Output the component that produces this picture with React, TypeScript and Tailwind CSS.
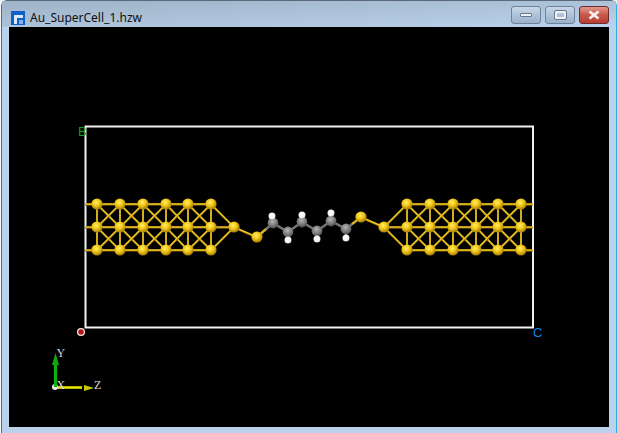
const columnsLeft = [97, 120, 143, 166, 188, 211];
const columnsRight = [407, 430, 453, 476, 498, 521];
const rows = [204, 227, 250];

type Line = [number, number, number, number];

function slabBonds(cols: number[]) {
  const lines: Line[] = [];
  cols.forEach((x, i) => {
    lines.push([x, rows[0], x, rows[2]]);
    const next = cols[i + 1];
    if (next === undefined) return;
    lines.push([x, rows[0], next, rows[1]]);
    lines.push([next, rows[0], x, rows[1]]);
    lines.push([x, rows[1], next, rows[2]]);
    lines.push([next, rows[1], x, rows[2]]);
  });
  rows.forEach((y) => lines.push([cols[0], y, cols[cols.length - 1], y]));
  return lines;
}

const goldBonds: Line[] = [
  ...slabBonds(columnsLeft),
  ...slabBonds(columnsRight),
  [85, 204, 97, 204],
  [85, 227, 97, 227],
  [85, 250, 97, 250],
  [521, 204, 533, 204],
  [521, 227, 533, 227],
  [521, 250, 533, 250],
  [211, 204, 234, 227],
  [211, 227, 234, 227],
  [211, 250, 234, 227],
  [407, 204, 384, 227],
  [407, 227, 384, 227],
  [407, 250, 384, 227],
  [234, 227, 257, 237],
  [361, 217, 384, 227],
];

const carbons = [
  [273, 223],
  [288, 232],
  [302, 222],
  [317, 231],
  [331, 221],
  [346, 229],
];

const hydrogens = [
  [272, 216],
  [288, 240],
  [302, 215],
  [317, 239],
  [331, 213],
  [346, 238],
];

const goldAtoms = [
  ...columnsLeft.flatMap((x) => rows.map((y) => [x, y])),
  ...columnsRight.flatMap((x) => rows.map((y) => [x, y])),
  [234, 227],
  [384, 227],
  [257, 237],
  [361, 217],
];

// offset everything from page coordinates to the viewport's own
const VIEW = "9 27 600 400";

function Scene() {
  return (
    <svg viewBox={VIEW} className="block w-full h-full">
      <defs>
        <radialGradient id="gold" cx="42%" cy="36%" r="65%">
          <stop offset="0%" stopColor="#fff06a" />
          <stop offset="50%" stopColor="#f2c414" />
          <stop offset="100%" stopColor="#9c7808" />
        </radialGradient>
        <radialGradient id="carbon" cx="45%" cy="35%" r="65%">
          <stop offset="0%" stopColor="#b4b4b4" />
          <stop offset="60%" stopColor="#7a7a7a" />
          <stop offset="100%" stopColor="#4c4c4c" />
        </radialGradient>
        <radialGradient id="hydrogen" cx="45%" cy="40%" r="65%">
          <stop offset="0%" stopColor="#ffffff" />
          <stop offset="75%" stopColor="#f0f0f0" />
          <stop offset="100%" stopColor="#a8a8a8" />
        </radialGradient>
      </defs>

      {/* cell box */}
      <rect x="85.5" y="126.5" width="447.5" height="201" fill="none" stroke="#f2f2f2" strokeWidth="2" />

      {goldBonds.map(([x1, y1, x2, y2], i) => (
        <g key={i}>
          <line x1={x1} y1={y1 + 0.6} x2={x2} y2={y2 + 0.6} stroke="#8f7010" strokeWidth="2" />
          <line x1={x1} y1={y1} x2={x2} y2={y2} stroke="#f2c81e" strokeWidth="1.4" />
        </g>
      ))}

      {/* carbon chain */}
      <polyline
        points="257,237 273,223 288,232 302,222 317,231 331,221 346,229 361,217"
        fill="none"
        stroke="#747474"
        strokeWidth="2.4"
      />
      <line x1="257" y1="237" x2="266" y2="229" stroke="#e2b31a" strokeWidth="2.2" />
      <line x1="352" y1="224" x2="361" y2="217" stroke="#e2b31a" strokeWidth="2.2" />
      {hydrogens.map(([x, y], i) => (
        <line key={i} x1={carbons[i][0]} y1={carbons[i][1]} x2={x} y2={y} stroke="#a0a0a0" strokeWidth="2" />
      ))}

      {goldAtoms.map(([x, y]) => (
        <circle key={`${x}-${y}`} cx={x} cy={y} r="5.6" fill="url(#gold)" />
      ))}
      {carbons.map(([x, y]) => (
        <circle key={`${x}-${y}`} cx={x} cy={y} r="5.4" fill="url(#carbon)" />
      ))}
      {hydrogens.map(([x, y]) => (
        <circle key={`${x}-${y}`} cx={x} cy={y} r="3.5" fill="url(#hydrogen)" />
      ))}

      {/* cell labels */}
      <circle cx="81" cy="332" r="3.4" fill="#b01414" stroke="#f0e4e4" strokeWidth="1.3" />
      <text x="78" y="136" fontSize="13" fontFamily="Liberation Sans" fill="#12a01c">B</text>
      <text x="533" y="337" fontSize="13" fontFamily="Liberation Sans" fill="#0a84e8">C</text>

      {/* axes */}
      <circle cx="55" cy="387" r="3" fill="#e8e8e8" />
      <line x1="55.5" y1="387" x2="55.5" y2="364" stroke="#10b010" strokeWidth="3.2" />
      <polygon points="55.5,353 59,365 52,365" fill="#10a810" />
      <line x1="57" y1="387.5" x2="82" y2="387.5" stroke="#e6e600" strokeWidth="2.6" />
      <polygon points="94,388 84,385 84,391" fill="#c8c800" />
      <g fontFamily="Liberation Serif" fontSize="12" fill="#d4d4d4">
        <text x="56.5" y="357">Y</text>
        <text x="56.5" y="389">X</text>
        <text x="94" y="389">Z</text>
      </g>
    </svg>
  );
}

function WindowButton({ danger, children }: { danger?: boolean; children: React.ReactNode }) {
  return (
    <div
      className={`flex items-center justify-center w-[30px] h-[18px] rounded-[3px] border ${
        danger
          ? "border-[#6e2a32] bg-gradient-to-b from-[#e0988c] via-[#c8584a] to-[#b83c34]"
          : "border-[#6d8199] bg-gradient-to-b from-[#c8d7e8] via-[#aec3da] to-[#9ab2cc]"
      }`}
    >
      {children}
    </div>
  );
}

export default function App() {
  return (
    <div className="w-[617px] h-[433px] bg-[#f4f6f8] overflow-hidden font-['Noto_Sans',sans-serif]">
      <div className="flex flex-col h-[433px] w-[616px] ml-px border-l border-t border-r border-l-[#5a6a7a] border-t-[#5a6a7a] border-r-[#26b4e6] rounded-t-[6px] bg-[#bad2ec]">
        {/* title bar */}
        <div className="flex items-start h-[26px] shrink-0 pl-[9px] pr-[7px] bg-gradient-to-br from-[#9fb3c7] to-[#bad2ec]">
          <svg width="14" height="14" viewBox="0 0 14 14" className="mr-[5px] mt-[10px] shrink-0">
            <rect width="14" height="14" fill="#0f5fc8" />
            <path d="M3 13V4h9v3H6v6z" fill="#d8e8f8" />
            <rect x="8" y="9" width="4" height="4" fill="#7db4ec" />
          </svg>
          <span className="text-[12px] leading-none mt-[11px] text-[#101010]">Au_SuperCell_1.hzw</span>
          <div className="flex gap-[4px] ml-auto mt-[5px]">
            <WindowButton>
              <div className="w-[12px] h-[4px] rounded-[1px] bg-[#eef2f6] border border-[#6b7785]" />
            </WindowButton>
            <WindowButton>
              <div className="w-[11px] h-[8px] rounded-[1px] border-2 border-[#eef2f6] outline outline-[#6b7785]" />
            </WindowButton>
            <WindowButton danger>
              <svg width="14" height="10" viewBox="0 0 14 10">
                <path d="M2.5 1.5l9 7M11.5 1.5l-9 7" stroke="#f4f0ee" strokeWidth="2.8" />
              </svg>
            </WindowButton>
          </div>
        </div>
        {/* viewport */}
        <div className="flex flex-1 px-[7px] pb-[6px]">
          <div className="w-[600px] h-[400px] bg-black">
            <Scene />
          </div>
        </div>
      </div>
    </div>
  );
}
